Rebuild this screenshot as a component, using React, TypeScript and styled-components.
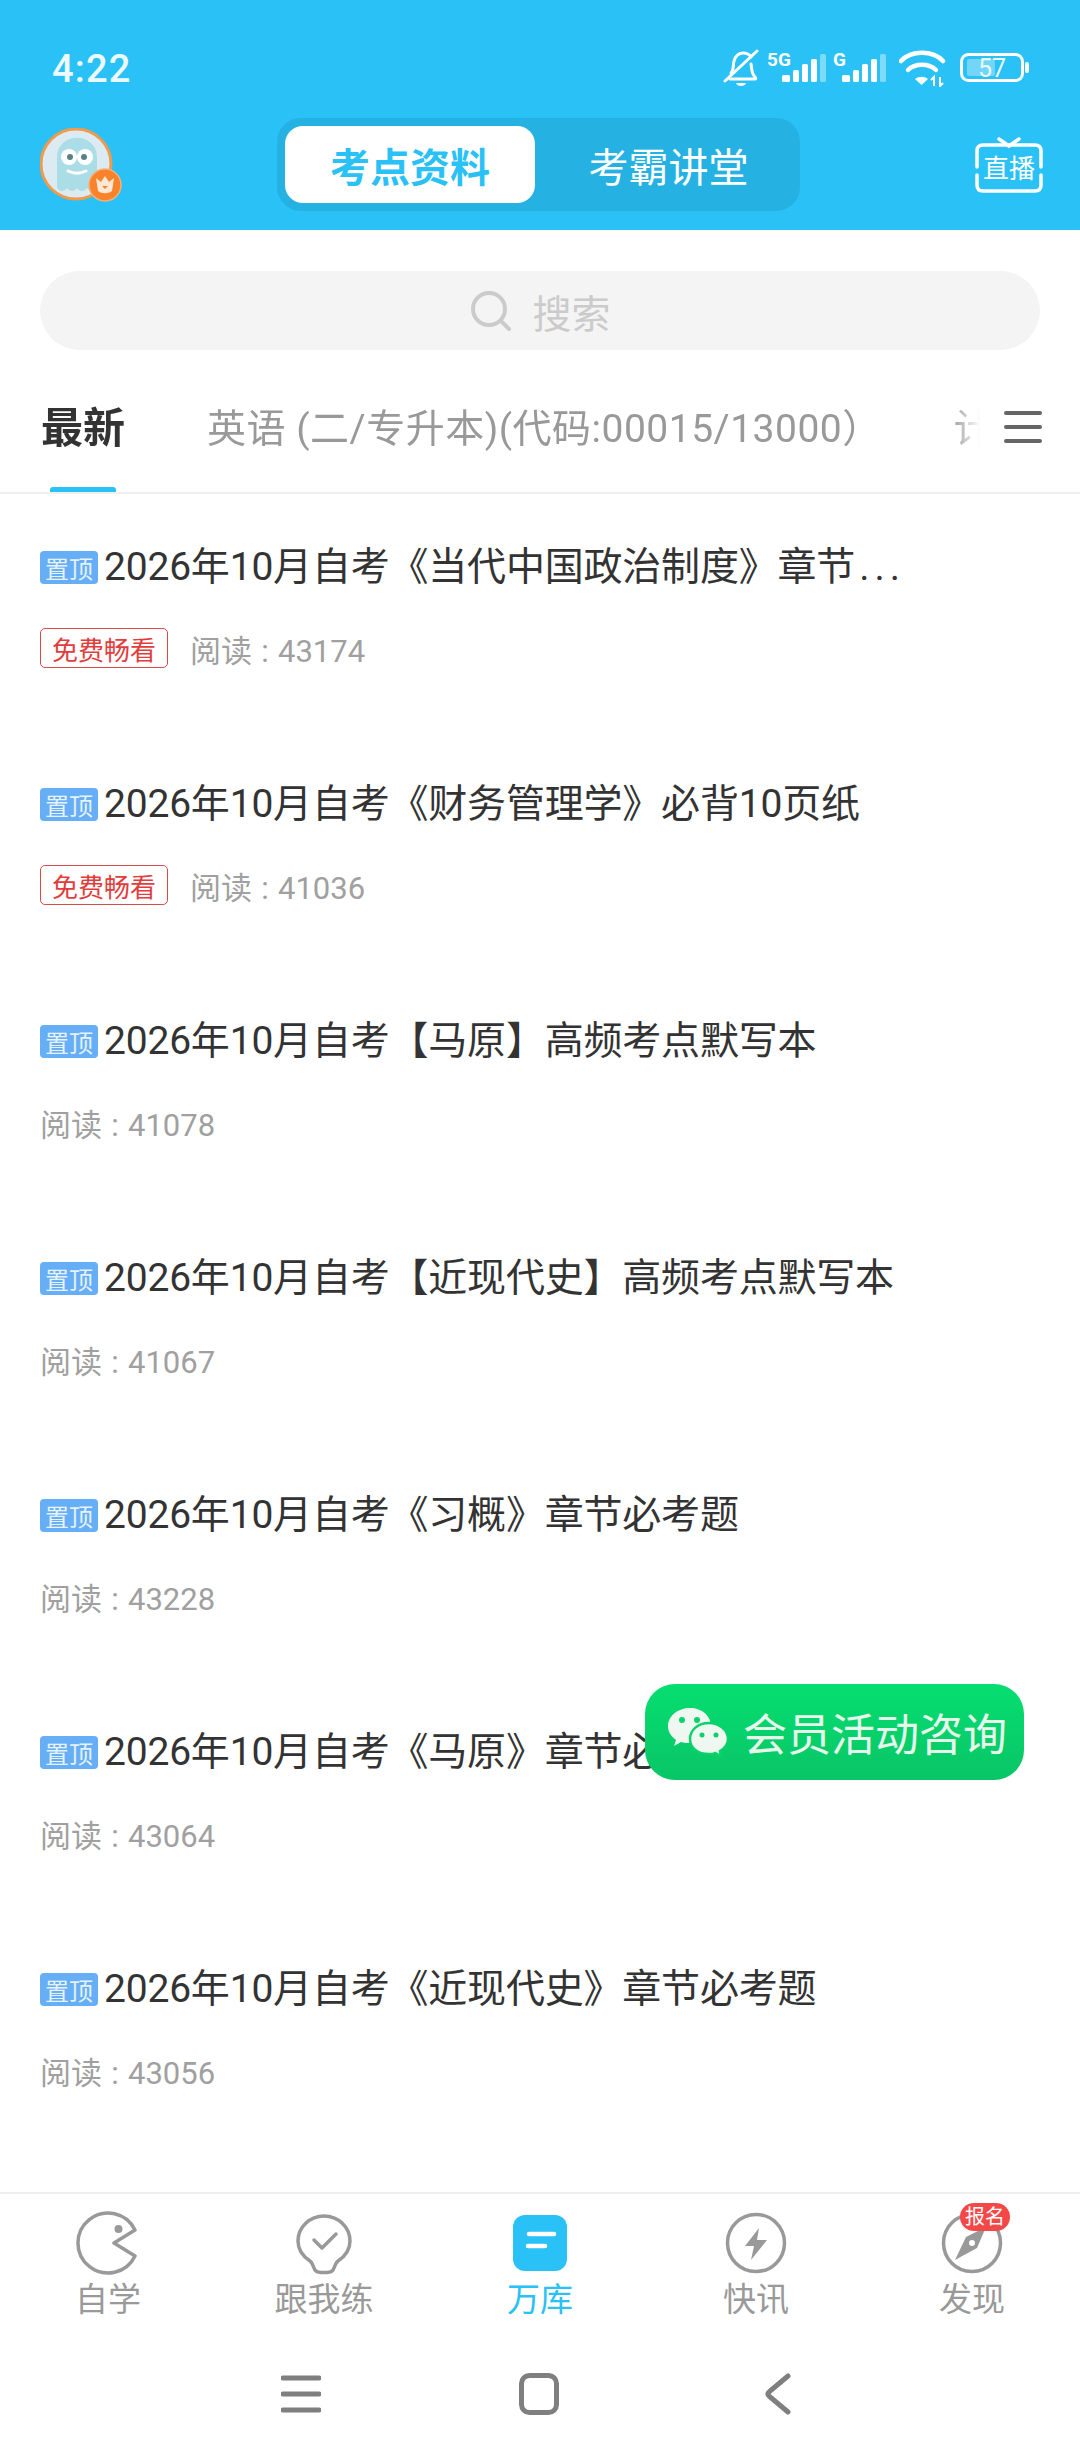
import React from "react";
import styled, { createGlobalStyle } from "styled-components";

const Global = createGlobalStyle`
html, body {
  margin: 0;
  padding: 0;
  background: #fff;
  font-family: Roboto, "Noto Sans CJK SC", sans-serif;
}
* { box-sizing: border-box; }
`;

const Page = styled.div`
width: 1080px;
height: 2460px;
display: flex;
flex-direction: column;
position: relative;
overflow: hidden;
background: #fff;
`;

const Header = styled.header`
height: 230px;
flex: none;
background: #29c1f6;
display: flex;
flex-direction: column;
`;

const StatusBar = styled.div`
height: 118px;
display: flex;
align-items: flex-start;
justify-content: space-between;
padding: 47px 50px 0 52px;
`;

const Clock = styled.span`
font-size: 38px;
line-height: 44px;
font-weight: 500;
letter-spacing: 1.2px;
color: #ecfaff;
`;

const StatusIcons = styled.div`
display: flex;
align-items: flex-start;
margin-top: 2px;
`;

const StatusIcon = styled.svg<{ $gap?: number }>`
flex: none;
margin-left: ${(p) => p.$gap ?? 0}px;
`;

const TopBar = styled.div`
height: 93px;
display: flex;
align-items: flex-start;
padding: 0 35px 0 40px;
`;

const AvatarWrap = styled.div`
width: 90px;
height: 92px;
flex: none;
margin-top: 10px;
`;

const Segment = styled.div`
width: 523px;
height: 93px;
margin-left: 147px;
margin-right: auto;
padding: 8px;
display: flex;
background: #25b2e3;
border-radius: 24px;
`;

const SegmentItem = styled.div<{ $active?: boolean }>`
width: ${(p) => (p.$active ? "250px" : "257px")};
padding-left: ${(p) => (p.$active ? 0 : 10)}px;
display: flex;
align-items: center;
justify-content: center;
border-radius: 18px;
font-size: 40px;
font-weight: ${(p) => (p.$active ? 700 : 400)};
background: ${(p) => (p.$active ? "#fff" : "transparent")};
color: ${(p) => (p.$active ? "#29c1f6" : "#fff")};
`;

const TvWrap = styled.div`
flex: none;
width: 72px;
margin-top: 19px;
line-height: 0;
`;

const SearchWrap = styled.div`
flex: none;
padding: 41px 40px 0;
`;

const SearchBox = styled.div`
height: 79px;
display: flex;
align-items: center;
justify-content: center;
gap: 19px;
background: #f4f4f4;
border-radius: 40px;
font-size: 39px;
color: #cbcbcb;
`;

const TabBar = styled.div`
flex: none;
height: 144px;
display: flex;
align-items: flex-start;
padding: 0 38px 0 41px;
border-bottom: 2px solid #f0f0f0;
`;

const TabScroll = styled.div`
flex: none;
width: 939px;
height: 142px;
display: flex;
gap: 72px;
overflow: hidden;
mask-image: linear-gradient(to right, #000 97%, transparent 100%);
`;

const Tab = styled.div<{ $active?: boolean }>`
flex: none;
height: 142px;
padding-top: 53px;
position: relative;
white-space: nowrap;
line-height: 52px;
margin-right: ${(p) => (p.$active ? 10 : 0)}px;
font-size: ${(p) => (p.$active ? "42px" : "39px")};
font-weight: ${(p) => (p.$active ? 700 : 400)};
letter-spacing: ${(p) => (p.$active ? 0 : 0.5)}px;
color: ${(p) => (p.$active ? "#333" : "#999")};
`;

const TabLine = styled.span`
position: absolute;
left: 9px;
right: 9px;
bottom: 0;
height: 5px;
border-radius: 3px 3px 0 0;
background: #29c1f6;
`;

const MenuButton = styled.div`
flex: none;
width: 38px;
margin-top: 61px;
margin-left: 24px;
display: flex;
flex-direction: column;
gap: 10px;
`;

const MenuBar = styled.span`
height: 4px;
border-radius: 2px;
background: #666;
`;

const List = styled.main`
flex: 1;
`;

const Row = styled.article`
height: 237px;
padding: 48px 40px 0;
`;

const TitleLine = styled.div`
height: 50px;
display: flex;
align-items: center;
`;

const PinTag = styled.span`
flex: none;
width: 58px;
height: 33px;
margin-right: 6px;
display: flex;
align-items: center;
justify-content: center;
border-radius: 4px;
background: #66aef5;
color: #e6f2ff;
font-size: 24px;
`;

const Title = styled.h2`
margin: 0;
font-size: 39px;
font-weight: 400;
line-height: 50px;
letter-spacing: -0.2px;
color: #333;
white-space: nowrap;
overflow: hidden;
`;

const Dots = styled.span`
margin-left: 4px;
letter-spacing: 5px;
`;

const Meta = styled.div`
height: 40px;
margin-top: 36px;
display: flex;
align-items: center;
gap: 22px;
`;

const FreeTag = styled.span`
width: 128px;
height: 40px;
display: flex;
align-items: center;
justify-content: center;
border: 1px solid #d94a4a;
border-radius: 5px;
color: #e23c3c;
font-size: 26px;
`;

const Reads = styled.span`
font-size: 31px;
color: #a0a0a0;
`;

const ReadsColon = styled.span`
display: inline-block;
width: 26px;
text-align: center;
`;

const Float = styled.div`
position: absolute;
left: 645px;
top: 1684px;
width: 379px;
height: 96px;
padding-left: 22px;
display: flex;
align-items: center;
gap: 14px;
border-radius: 30px;
background: linear-gradient(#05de70, #09c566);
color: #e6f8ec;
font-size: 44px;
white-space: nowrap;
`;

const BottomNav = styled.nav`
flex: none;
height: 163px;
display: grid;
grid-template-columns: repeat(5, 1fr);
border-top: 2px solid #eee;
`;

const NavItem = styled.div<{ $active?: boolean }>`
display: flex;
flex-direction: column;
align-items: center;
position: relative;
padding-top: 17px;
font-size: 33px;
line-height: 40px;
color: ${(p) => (p.$active ? "#29c1f6" : "#999")};
`;

const NavLabel = styled.span`
margin-top: 5px;
`;

const Badge = styled.span`
position: absolute;
left: 96px;
top: 9px;
width: 50px;
height: 28px;
display: flex;
align-items: center;
justify-content: center;
border-radius: 14px;
background: #f44848;
color: #fff;
font-size: 20px;
`;

const SystemBar = styled.div`
flex: none;
height: 105px;
padding-left: 281px;
display: grid;
grid-template-columns: 238px 246px 26px;
align-items: start;
`;

const SysIcon = styled.svg`
margin-top: 18px;
`;

const signalBars = [
    { x: 0, y: 26, w: 8, h: 7 },
    { x: 11, y: 21, w: 6, h: 12 },
    { x: 20, y: 15, w: 6, h: 18 },
    { x: 29, y: 10, w: 6, h: 23 },
];

const Signal: React.FC<{ label: string; labelSize: number; barsAt: number; width: number; gap: number }> = ({ label, labelSize, barsAt, width, gap }) => (
    <StatusIcon $gap={gap} width={width} height={36} viewBox={`0 0 ${width} 36`}>
        <text x="0" y="17" fontSize={labelSize} fontWeight="700" fill="#fff" fontFamily="Roboto">{label}</text>
        <g transform={`translate(${barsAt},0)`} fill="#fff">
            {signalBars.map((b) => <rect key={b.x} x={b.x} y={b.y} width={b.w} height={b.h} rx="1.5" />)}
            <rect x="38" y="5" width="6" height="28" rx="1.5" opacity=".4" />
        </g>
    </StatusIcon>
);

const StatusGroup = () => (
    <StatusIcons>
        <StatusIcon width="36" height="40" viewBox="0 0 36 40">
            <path d="M8 24c3-3 2-8 3-12 1-5 5-8 9-8 3 0 6 1 8 4M28 15c1 4 0 9 4 13 1 1 1 2 0 2H7" fill="none" stroke="#fff" strokeWidth="3" strokeLinecap="round" />
            <path d="M34 2 2 32" stroke="#fff" strokeWidth="3" strokeLinecap="round" />
            <path d="M13 34h10c-1 4-9 4-10 0z" fill="#fff" />
        </StatusIcon>
        <Signal label="5G" labelSize={19} barsAt={15} width={60} gap={8} />
        <Signal label="G" labelSize={19} barsAt={9} width={54} gap={6} />
        <StatusIcon $gap={12} width="48" height="38" viewBox="0 0 48 38">
            <g fill="none" stroke="#fff" strokeWidth="4.500" strokeLinecap="round">
                <path d="M2 12C12 1 34 1 44 12" />
                <path d="M9 21c7-7 21-7 28 0" />
            </g>
            <path d="M16 30c4-3 9-3 13 0l-6.500 6z" fill="#fff" />
            <path d="M35 37v-9l-3 3M41 28v9l3-3" fill="none" stroke="#fff" strokeWidth="2" />
        </StatusIcon>
        <StatusIcon $gap={13} width="70" height="36" viewBox="0 0 70 36">
            <rect x="1.500" y="5.500" width="61" height="26" rx="7" fill="none" stroke="#fff" strokeWidth="3" />
            <rect x="7" y="10" width="28" height="17" rx="2" fill="#fff" opacity=".35" />
            <rect x="65" y="13" width="4" height="11" rx="2" fill="#fff" />
            <text x="18" y="28" fontSize="25" fill="#e8f8ff" fontFamily="Roboto">57</text>
        </StatusIcon>
    </StatusIcons>
);

const Avatar = () => (
    <AvatarWrap>
        <svg width="90" height="92" viewBox="0 0 90 92">
            <circle cx="36" cy="36" r="35" fill="#dcebf1" stroke="#ef9a4c" strokeWidth="3" />
            <path d="M17 60V30c0-27 40-27 40 0v30c-3 4-7 4-10 0-3 4-7 4-10 0-3 4-7 4-10 0-3 4-7 4-10 0z" fill="#abdde7" />
            <circle cx="29" cy="29" r="8" fill="#fff" />
            <circle cx="45" cy="29" r="8" fill="#fff" />
            <circle cx="30" cy="29" r="3" fill="#5b8088" />
            <circle cx="44" cy="29" r="3" fill="#5b8088" />
            <path d="M28 43c6 3 12 3 18 0" fill="none" stroke="#fff" strokeWidth="3" strokeLinecap="round" />
            <circle cx="65" cy="57" r="16" fill="#f9822a" stroke="#f3b27c" strokeWidth="1.500" />
            <path d="M56 50l5 4 4-6 4 6 5-4-2 13c-4 3-10 3-14 0z" fill="#ffe9d6" />
            <path d="M62 58h6l-3 3z" fill="#f9822a" />
        </svg>
    </AvatarWrap>
);

const TvIcon = () => (
    <TvWrap>
        <svg width="72" height="58" viewBox="0 0 72 58">
            <path d="M4 30V14c0-4 2-6 6-6h52c4 0 6 2 6 6v16M4 38v10c0 4 2 6 6 6h52c4 0 6-2 6-6V38" fill="none" stroke="#fff" strokeWidth="3.500" strokeLinecap="round" />
            <path d="M26 2l10 7 10-7" fill="none" stroke="#fff" strokeWidth="3.500" strokeLinecap="round" />
            <text x="36" y="41" textAnchor="middle" fontSize="26" fill="#fff" fontFamily="'Noto Sans CJK SC'">直播</text>
        </svg>
    </TvWrap>
);

const SearchIcon = () => (
    <svg width="44" height="44" viewBox="0 0 44 44">
        <circle cx="20" cy="20" r="16" fill="none" stroke="#cbcbcb" strokeWidth="4" />
        <path d="M32 32l8 8" stroke="#cbcbcb" strokeWidth="4" strokeLinecap="round" />
    </svg>
);

const WeChat = () => (
    <svg width="62" height="52" viewBox="0 0 62 52">
        <path d="M23 2C11 2 1 10 1 20c0 6 3 10 8 14l-2 6 7-4c3 1 6 1 9 1C35 37 44 29 44 20 44 10 35 2 23 2z" fill="#eef8f1" />
        <path d="M42 17c-11 0-19 7-19 16s8 15 19 15c2 0 4 0 6-1l6 3-1-5c5-3 8-7 8-12 0-9-9-16-19-16z" fill="#eef8f1" stroke="#0ad26b" strokeWidth="2.500" />
        <circle cx="15" cy="14" r="3" fill="#0ad26b" />
        <circle cx="30" cy="14" r="3" fill="#0ad26b" />
        <circle cx="35" cy="29" r="2.500" fill="#0ad26b" />
        <circle cx="49" cy="29" r="2.500" fill="#0ad26b" />
    </svg>
);

const navStroke = { fill: "none", stroke: "#999", strokeWidth: 3.5, strokeLinecap: "round", strokeLinejoin: "round" } as const;

const IconStudy = () => (
    <svg width="64" height="64" viewBox="-32 -32 64 64">
        <path d="M27-13A30 30 0 1 0 27 13L6 0z" {...navStroke} />
        <circle cx="10.500" cy="-14" r="4" fill="#999" />
    </svg>
);

const IconPractice = () => (
    <svg width="64" height="64" viewBox="0 0 64 64">
        <path d="M32 5C18 5 6 16 6 30c0 10 6 16 12 20 4 3 3 8 6 10 2 2 14 2 16 0 3-2 2-7 6-10 6-4 12-10 12-20C58 16 46 5 32 5z" {...navStroke} />
        <path d="M22 29l8 8 14-14" {...navStroke} />
    </svg>
);

const IconLibrary = () => (
    <svg width="64" height="64" viewBox="0 0 64 64">
        <rect x="5" y="4" width="54" height="56" rx="12" fill="#29c1f6" />
        <path d="M21 23h25M20 35h17" stroke="#fff" strokeWidth="4.500" strokeLinecap="round" />
    </svg>
);

const IconNews = () => (
    <svg width="64" height="64" viewBox="0 0 64 64">
        <circle cx="32" cy="32" r="28.500" {...navStroke} />
        <path d="M35 17L21 35h9l-3 14 16-20h-10z" fill="#999" />
    </svg>
);

const IconFind = () => (
    <svg width="64" height="64" viewBox="0 0 64 64">
        <circle cx="32" cy="32" r="28.500" {...navStroke} />
        <path d="M46 16L26 26 15 49l22-12z" fill="#999" />
        <circle cx="32" cy="32" r="3" fill="#fff" />
    </svg>
);

const rows = [
    { title: "2026年10月自考《当代中国政治制度》章节", cut: true, reads: 43174, free: true },
    { title: "2026年10月自考《财务管理学》必背10页纸", reads: 41036, free: true },
    { title: "2026年10月自考【马原】高频考点默写本", reads: 41078 },
    { title: "2026年10月自考【近现代史】高频考点默写本", reads: 41067 },
    { title: "2026年10月自考《习概》章节必考题", reads: 43228 },
    { title: "2026年10月自考《马原》章节必考题", reads: 43064 },
    { title: "2026年10月自考《近现代史》章节必考题", reads: 43056 },
];

const App: React.FC = () => {
    return <Page>
        <Global />
        <Header>
            <StatusBar>
                <Clock>4:22</Clock>
                <StatusGroup />
            </StatusBar>
            <TopBar>
                <Avatar />
                <Segment>
                    <SegmentItem $active>考点资料</SegmentItem>
                    <SegmentItem>考霸讲堂</SegmentItem>
                </Segment>
                <TvIcon />
            </TopBar>
        </Header>
        <SearchWrap>
            <SearchBox>
                <SearchIcon />
                搜索
            </SearchBox>
        </SearchWrap>
        <TabBar>
            <TabScroll>
                <Tab $active>最新<TabLine /></Tab>
                <Tab>英语 (二/专升本)(代码:00015/13000）</Tab>
                <Tab>计算机</Tab>
            </TabScroll>
            <MenuButton>
                <MenuBar />
                <MenuBar />
                <MenuBar />
            </MenuButton>
        </TabBar>
        <List>
            {rows.map((row) => (
                <Row key={row.title}>
                    <TitleLine>
                        <PinTag>置顶</PinTag>
                        <Title>{row.title}{row.cut && <Dots>...</Dots>}</Title>
                    </TitleLine>
                    <Meta>
                        {row.free && <FreeTag>免费畅看</FreeTag>}
                        <Reads>阅读<ReadsColon>:</ReadsColon>{row.reads}</Reads>
                    </Meta>
                </Row>
            ))}
        </List>
        <Float>
            <WeChat />
            会员活动咨询
        </Float>
        <BottomNav>
            <NavItem><IconStudy /><NavLabel>自学</NavLabel></NavItem>
            <NavItem><IconPractice /><NavLabel>跟我练</NavLabel></NavItem>
            <NavItem $active><IconLibrary /><NavLabel>万库</NavLabel></NavItem>
            <NavItem><IconNews /><NavLabel>快讯</NavLabel></NavItem>
            <NavItem><Badge>报名</Badge><IconFind /><NavLabel>发现</NavLabel></NavItem>
        </BottomNav>
        <SystemBar>
            <SysIcon width="40" height="42" viewBox="0 0 40 42">
                <path d="M2 5h36M2 21h36M2 37h36" stroke="#7f7f7f" strokeWidth="5" strokeLinecap="round" />
            </SysIcon>
            <SysIcon width="40" height="42" viewBox="0 0 40 42">
                <rect x="2.500" y="2.500" width="35" height="37" rx="8" fill="none" stroke="#7f7f7f" strokeWidth="5" />
            </SysIcon>
            <SysIcon width="26" height="42" viewBox="0 0 26 42">
                <path d="M23 3L4 19c-1.500 1-1.500 3 0 4l19 16" fill="none" stroke="#7f7f7f" strokeWidth="5" strokeLinecap="round" />
            </SysIcon>
        </SystemBar>
    </Page>;
};

export default App;
